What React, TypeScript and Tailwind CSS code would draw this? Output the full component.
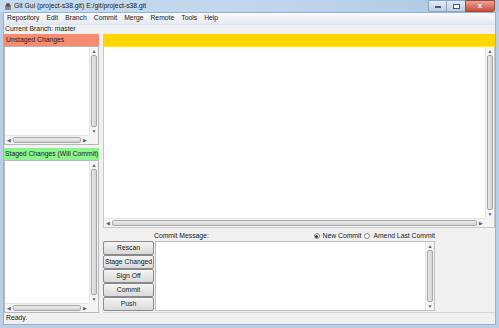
import React from 'react';

const font = { fontFamily: '"Liberation Sans", Arial, sans-serif' };

const VScroll = () => (
  <div className="w-[9px] flex flex-col bg-[#f4f4f4] border-l border-[#e4e4e4]">
    <div className="h-[8px] flex items-center justify-center text-[5px] leading-none text-[#606060]">▲</div>
    <div className="flex-1 mx-[1px] rounded-[2px] border border-[#a8a8a8] bg-gradient-to-r from-[#e8e8e8] to-[#d4d4d4]" />
    <div className="h-[8px] flex items-center justify-center text-[5px] leading-none text-[#606060]">▼</div>
  </div>
);

const HScroll = () => (
  <div className="h-[9px] flex flex-row bg-[#f4f4f4] border-t border-[#e4e4e4]">
    <div className="w-[8px] flex items-center justify-center text-[5px] leading-none text-[#606060]">◀</div>
    <div className="flex-1 my-[1px] rounded-[2px] border border-[#a8a8a8] bg-gradient-to-b from-[#ececec] to-[#d4d4d4]" />
    <div className="w-[8px] flex items-center justify-center text-[5px] leading-none text-[#606060]">▶</div>
  </div>
);

const FileList = ({ className }: { className: string }) => (
  <div className={`flex flex-col bg-white border border-[#b8b8b8] ${className}`}>
    <div className="flex flex-1 flex-row">
      <div className="flex-1" />
      <VScroll />
    </div>
    <div className="flex flex-row">
      <div className="flex-1"><HScroll /></div>
      <div className="w-[9px] bg-[#f4f4f4]" />
    </div>
  </div>
);

const buttons = ['Rescan', 'Stage Changed', 'Sign Off', 'Commit', 'Push'];

const App = () => {
  return (
    <div className="w-[499px] h-[328px] flex flex-col bg-[#b9cfe6] text-[6.8px] text-[#202020] overflow-hidden" style={font}>
      {/* title bar */}
      <div className="h-[15px] flex flex-row items-center bg-gradient-to-r from-[#c6dbef] via-[#c0d6ec] to-[#aec8e4] pl-[4px]">
        <svg width="8" height="9" viewBox="0 0 8 9" className="mr-[2px]">
          <rect x="1" y="3" width="6" height="5" fill="#8a8a8a" />
          <circle cx="4" cy="3" r="2" fill="#555" />
        </svg>
        <span className="text-[#1a1a1a] leading-none">Git Gui (project-s38.git) E:/git/project-s38.git</span>
        <div className="flex-1" />
        <div className="flex flex-row self-start mr-[4px]">
          <div className="w-[19px] h-[12px] flex items-end justify-center pb-[3px] border border-[#8ea4bd] rounded-bl-[3px] bg-gradient-to-b from-[#e0ebf6] to-[#bcd0e6]">
            <div className="w-[6px] h-[2px] bg-white border border-[#4a5a70]" />
          </div>
          <div className="w-[18px] h-[12px] flex items-center justify-center border-y border-[#8ea4bd] bg-gradient-to-b from-[#e0ebf6] to-[#bcd0e6]">
            <div className="w-[7px] h-[5px] border border-[#4a5a70] bg-white" />
          </div>
          <div className="w-[30px] h-[12px] flex items-center justify-center border border-[#9a4a3a] rounded-br-[3px] bg-gradient-to-b from-[#eaa494] to-[#cc4a3c] text-white font-bold text-[8px] leading-none">
            x
          </div>
        </div>
      </div>

      {/* client area */}
      <div className="flex-1 flex flex-col mx-[3px] mb-[4px] bg-[#f0f0f0] border border-[#9cb2ca]">
        {/* menu */}
        <div className="h-[12px] flex flex-row items-center gap-[7px] px-[3px] bg-gradient-to-b from-[#fafbfd] to-[#e4e9f2] border-b border-[#dfe4ec] leading-none">
          {['Repository', 'Edit', 'Branch', 'Commit', 'Merge', 'Remote', 'Tools', 'Help'].map(m => (
            <span key={m}>{m}</span>
          ))}
        </div>
        <div className="h-[9px] flex items-center px-[1px] leading-none">Current Branch: master</div>

        <div className="flex-1 flex flex-row">
          {/* left column */}
          <div className="w-[95px] flex flex-col">
            <div className="h-[12px] flex items-center px-[2px] bg-[#f58b70] leading-none whitespace-nowrap">Unstaged Changes</div>
            <FileList className="h-[99px]" />
            <div className="h-[3px]" />
            <div className="h-[12px] flex items-center px-[1px] bg-[#8ef28e] leading-none whitespace-nowrap overflow-hidden">Staged Changes (Will Commit)</div>
            <FileList className="flex-1" />
          </div>
          <div className="w-[4px]" />

          {/* right column */}
          <div className="flex-1 flex flex-col">
            <div className="h-[13px] bg-[#ffd600] border-b border-[#f0e070]" />
            <div className="h-[181px] flex flex-col bg-white border-x border-b border-[#c8c8c8]">
              <div className="flex-1 flex flex-row">
                <div className="flex-1" />
                <VScroll />
              </div>
              <div className="flex flex-row">
                <div className="flex-1"><HScroll /></div>
                <div className="w-[9px] bg-[#f4f4f4]" />
              </div>
            </div>
            <div className="flex-1 flex flex-col pt-[3px] border-b border-[#d8d8d8]">
              <div className="h-[10px] flex flex-row items-center leading-none pr-[60px]">
                <div className="w-[51px]" />
                <span>Commit Message:</span>
                <div className="flex-1" />
                <span className="w-[6px] h-[6px] rounded-full border border-[#8a8a8a] bg-white flex items-center justify-center mr-[3px]">
                  <span className="w-[3px] h-[3px] rounded-full bg-[#404040]" />
                </span>
                <span className="mr-[3px]">New Commit</span>
                <span className="w-[6px] h-[6px] rounded-full border border-[#8a8a8a] bg-white mr-[3px]" />
                <span>Amend Last Commit</span>
              </div>
              <div className="flex-1 flex flex-row pb-[1px]">
                <div className="w-[51px] flex flex-col">
                  {buttons.map(b => (
                    <div
                      key={b}
                      className="h-[14px] flex items-center justify-center border border-[#8a8a8a] rounded-[2px] bg-gradient-to-b from-[#f4f4f4] to-[#dadada] leading-none whitespace-nowrap"
                    >
                      {b}
                    </div>
                  ))}
                </div>
                <div className="w-[280px] flex flex-row bg-white border border-[#c0c0c0] ml-[1px]">
                  <div className="flex-1" />
                  <VScroll />
                </div>
              </div>
            </div>
          </div>
        </div>

        {/* status */}
        <div className="h-[11px] flex items-center px-[2px] leading-none">Ready.</div>
      </div>
    </div>
  );
};

export default App;
